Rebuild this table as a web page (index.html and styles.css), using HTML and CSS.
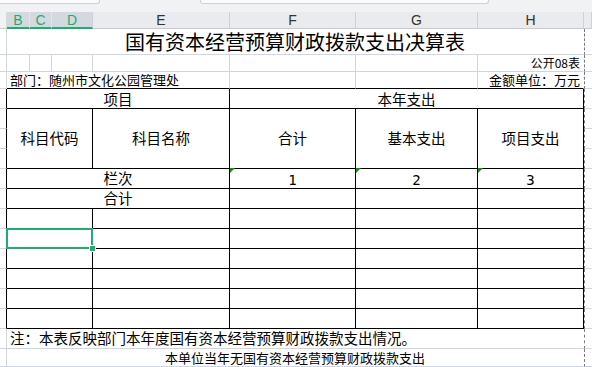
FILE: index.html
```html
<!DOCTYPE html>
<html lang="zh-CN">
<head>
<meta charset="utf-8">
<title>国有资本经营预算财政拨款支出决算表</title>
<link rel="stylesheet" href="styles.css">
</head>
<body>
<div class="strip">
  <div class="tab tab1"></div>
  <div class="tab tab2"></div>
</div>
<div class="sheet">
  <!-- row 1: column headers -->
  <div class="h corner"></div>
  <div class="h sel">B</div>
  <div class="h sel">C</div>
  <div class="h sel">D</div>
  <div class="h">E</div>
  <div class="h">F</div>
  <div class="h">G</div>
  <div class="h last">H</div>
  <div class="h"></div>

  <!-- row 2: title -->
  <div class="c rh"></div>
  <div class="c s7 title nr">国有资本经营预算财政拨款支出决算表</div>
  <div class="c ic"></div>

  <!-- row 3 -->
  <div class="c rh"></div>
  <div class="c"></div>
  <div class="c"></div>
  <div class="c"></div>
  <div class="c"></div>
  <div class="c"></div>
  <div class="c"></div>
  <div class="c nr right small low">公开08表</div>
  <div class="c ic"></div>

  <!-- row 4 -->
  <div class="c rh"></div>
  <div class="c s4 bb left mid bottom">部门：随州市文化公园管理处</div>
  <div class="c bb"></div>
  <div class="c bb"></div>
  <div class="c bb nr right mid bottom">金额单位：万元</div>
  <div class="c ic"></div>

  <!-- row 5 -->
  <div class="c rh br"></div>
  <div class="c s4 t drop">项目</div>
  <div class="c s3 t drop">本年支出</div>
  <div class="c ic"></div>

  <!-- rows 6-8 -->
  <div class="c rh br"></div>
  <div class="c s3 r3 t">科目代码</div>
  <div class="c r3 t">科目名称</div>
  <div class="c r3 t">合计</div>
  <div class="c r3 t">基本支出</div>
  <div class="c r3 t">项目支出</div>
  <div class="c ic"></div>
  <div class="c rh br"></div>
  <div class="c ic"></div>
  <div class="c rh br"></div>
  <div class="c ic"></div>

  <!-- row 9 -->
  <div class="c rh br"></div>
  <div class="c s4 t">栏次</div>
  <div class="c t tri num">1</div>
  <div class="c t tri num">2</div>
  <div class="c t tri num">3</div>
  <div class="c ic"></div>

  <!-- row 10 -->
  <div class="c rh br"></div>
  <div class="c s4 t">合计</div>
  <div class="c t"></div>
  <div class="c t"></div>
  <div class="c t"></div>
  <div class="c ic"></div>

  <!-- rows 11-16 -->
  <div class="c rh br"></div><div class="c s3 t"></div><div class="c t"></div><div class="c t"></div><div class="c t"></div><div class="c t"></div><div class="c ic"></div>
  <div class="c rh br"></div><div class="c s3 t"><span class="selbox"><span class="handle"></span></span></div><div class="c t"></div><div class="c t"></div><div class="c t"></div><div class="c t"></div><div class="c ic"></div>
  <div class="c rh br"></div><div class="c s3 t"></div><div class="c t"></div><div class="c t"></div><div class="c t"></div><div class="c t"></div><div class="c ic"></div>
  <div class="c rh br"></div><div class="c s3 t"></div><div class="c t"></div><div class="c t"></div><div class="c t"></div><div class="c t"></div><div class="c ic"></div>
  <div class="c rh br"></div><div class="c s3 t"></div><div class="c t"></div><div class="c t"></div><div class="c t"></div><div class="c t"></div><div class="c ic"></div>
  <div class="c rh br"></div><div class="c s3 t"></div><div class="c t"></div><div class="c t"></div><div class="c t"></div><div class="c t"></div><div class="c ic"></div>

  <!-- row 17: note -->
  <div class="c rh"></div>
  <div class="c s7 nr left note">注：本表反映部门本年度国有资本经营预算财政拨款支出情况。</div>
  <div class="c ic"></div>

  <!-- row 18 -->
  <div class="c rh"></div>
  <div class="c s7 nr mid">本单位当年无国有资本经营预算财政拨款支出</div>
  <div class="c ic"></div>
</div>
</body>
</html>
```
FILE: styles.css
```css
html, body {
  margin: 0;
  padding: 0;
  width: 592px;
  height: 367px;
  overflow: hidden;
  background: #ffffff;
  font-family: "Noto Sans CJK SC", "Liberation Sans", sans-serif;
  color: #000;
}

.strip {
  height: 12px;
  background: #f1f2f4;
  display: flex;
  gap: 100px;
  align-items: flex-start;
}

.tab {
  height: 3px;
  background: #fbfbfc;
  border: 1px solid #cfd2d8;
  border-top: none;
}

.tab1 {
  width: 99px;
  border-left: none;
  border-radius: 0 0 3px 0;
}

.tab2 {
  width: 287px;
  border-radius: 0 0 3px 3px;
}

.sheet {
  display: grid;
  grid-template-columns: 7px 23px 22px 41px 137px 126px 122px 106px 8px;
  grid-template-rows: 17px 26px 17px 17px repeat(13, 20px) 18px;
}

/* column header */
.h {
  box-sizing: border-box;
  background: #e9ebee;
  border-right: 1px solid #cdd1d9;
  border-bottom: 1px solid #c6cbd6;
  display: flex;
  align-items: center;
  justify-content: center;
  font-family: "Liberation Sans", "DejaVu Sans", sans-serif;
  font-size: 14px;
  line-height: 1;
  color: #333;
}

.h.corner {
  background: #f1f2f4;
  border-right-color: #d7dae0;
}

.h.sel {
  background: #d5d8de;
  color: #21ad72;
  border-right-color: #e2e4e8;
  border-bottom: 2px solid #21ad72;
}

.h.sel:nth-child(4) {
  border-right-color: #cdd1d9;
}

/* cells */
.c {
  box-sizing: border-box;
  border-right: 1px solid #d0d5e2;
  border-bottom: 1px solid #d0d5e2;
  display: flex;
  align-items: center;
  justify-content: center;
  white-space: nowrap;
  font-size: 14.5px;
  line-height: 1;
  position: relative;
  min-width: 0;
}

.rh {
  border-right-color: #d0d5e2;
}

.s7 { grid-column: span 7; }
.s4 { grid-column: span 4; }
.s3 { grid-column: span 3; }
.r3 { grid-row: span 3; }

.t {
  border-right-color: #000;
  border-bottom-color: #000;
}

.bb { border-bottom-color: #000; }
.br { border-right-color: #000; }
.nr { border-right-color: transparent; }

.ic {
  border-right: none;
  border-left: 1px dashed #7a7a7a;
}

.title {
  font-size: 20px;
  padding-top: 1px;
}

.left {
  justify-content: flex-start;
  padding-left: 3px;
}

.right {
  justify-content: flex-end;
  padding-right: 3px;
}

.small { font-size: 12px; }
.mid { font-size: 13px; }

.low {
  align-items: flex-end;
  padding-bottom: 2px;
}

.bottom {
  align-items: flex-end;
  padding-bottom: 2px;
}

.drop {
  padding-top: 2px;
}

.note {
  font-size: 14.5px;
}

.num {
  font-family: "DejaVu Sans Mono", "Liberation Mono", monospace;
  font-size: 14px;
  padding-top: 2px;
}

.tri::before {
  content: "";
  position: absolute;
  left: 0;
  top: -1px;
  border-top: 5px solid #1c8a1c;
  border-right: 5px solid transparent;
}

.selbox {
  position: absolute;
  left: -1px;
  top: -1px;
  width: 87px;
  height: 21px;
  box-sizing: border-box;
  border: 2px solid #21ad72;
  z-index: 2;
}

.handle {
  position: absolute;
  right: -4px;
  bottom: -4px;
  width: 5px;
  height: 5px;
  background: #21ad72;
  outline: 1px solid #fff;
}
```
